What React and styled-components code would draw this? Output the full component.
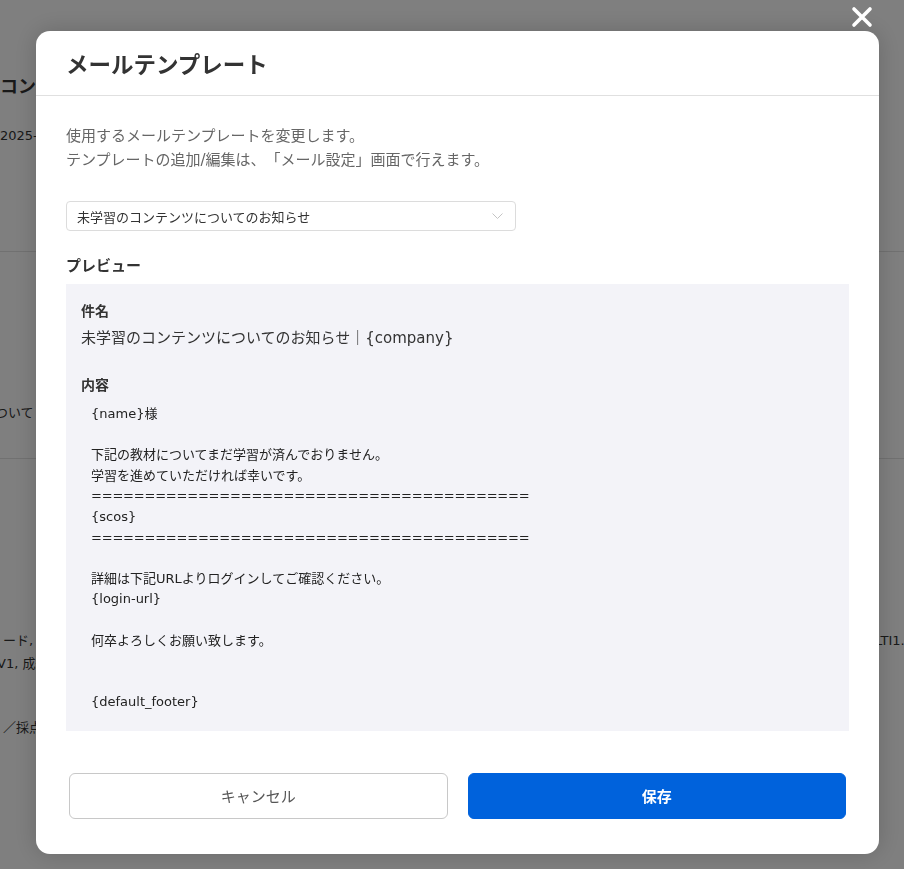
import React from 'react';
import styled, { createGlobalStyle } from 'styled-components';

const font = `"DejaVu Sans", "Noto Sans CJK JP", sans-serif`;

const GlobalStyle = createGlobalStyle`
  html, body {
    margin: 0;
    padding: 0;
    overflow: hidden;
    background: #ffffff;
  }
  body {
    font-family: ${font};
    color: #333;
    text-spacing-trim: space-all;
  }
`;

/* ---------- page behind the dialog ---------- */

const Page = styled.div`
  width: 904px;
  height: 869px;
  overflow: hidden;
  padding-top: 75px;
  box-sizing: border-box;
  color: #333;
`;

const PageTitle = styled.h1`
  margin: 0;
  font-size: 18px;
  line-height: 24px;
  font-weight: 700;
  white-space: nowrap;
`;

const PageText = styled.div`
  margin-top: ${p => p.$top || 0}px;
  margin-left: ${p => p.$shift || 0}px;
  font-size: 13px;
  line-height: ${p => p.$lh || 20}px;
  white-space: nowrap;
`;

const Divider = styled.div`
  margin-top: ${p => p.$top}px;
  height: 1px;
  background: #e2e2e2;
`;

const InfoLine = styled.div`
  margin-top: ${p => p.$top || 0}px;
  display: flex;
  font-size: 13px;
  line-height: 23px;
  white-space: nowrap;
`;

const InfoLeft = styled.span`
  flex: 0 0 875px;
  padding-left: 3px;
  box-sizing: border-box;
`;

/* ---------- dialog ---------- */

const Overlay = styled.div`
  position: fixed;
  inset: 0;
  background: rgba(0, 0, 0, 0.5);
  padding: 31px 0 0 36px;
  box-sizing: border-box;
`;

const CloseButton = styled.button`
  position: absolute;
  top: 6px;
  right: 31px;
  width: 22px;
  height: 22px;
  padding: 0;
  border: none;
  background: transparent;
  display: flex;
  align-items: center;
  justify-content: center;
  cursor: pointer;
`;

const Modal = styled.div`
  width: 843px;
  background: #fff;
  border-radius: 14px;
  box-shadow: 0 0 24px rgba(0, 0, 0, 0.18);
  display: flex;
  flex-direction: column;
`;

const Header = styled.div`
  height: 64px;
  padding: 0 30px;
  display: flex;
  align-items: center;
  border-bottom: 1px solid #e0e0e0;
`;

const Title = styled.h2`
  margin: 0;
  font-size: 22.5px;
  font-weight: 700;
  color: #333;
`;

const Body = styled.div`
  padding: 28px 30px 0;
  display: flex;
  flex-direction: column;
`;

const Description = styled.p`
  margin: 0;
  font-size: 15px;
  line-height: 24px;
  color: #666;
`;

const Select = styled.div`
  margin-top: 29px;
  width: 450px;
  height: 30px;
  box-sizing: border-box;
  border: 1px solid #dcdcdc;
  border-radius: 4px;
  padding: 0 12px 0 10px;
  display: flex;
  align-items: center;
  justify-content: space-between;
  font-size: 13px;
  color: #333;
`;

const SectionLabel = styled.div`
  margin-top: 24px;
  font-size: 15px;
  line-height: 22px;
  font-weight: 700;
  color: #333;
`;

const Preview = styled.div`
  margin-top: 7px;
  background: #f3f3f8;
  padding: 16px 15px 18px;
`;

const FieldLabel = styled.div`
  margin-top: ${p => p.$top || 0}px;
  font-size: 14px;
  line-height: 22px;
  font-weight: 700;
  color: #333;
`;

const Subject = styled.div`
  margin-top: 4px;
  font-size: 15px;
  line-height: 24px;
  color: #333;
`;

const Content = styled.pre`
  margin: 8px 0 0;
  padding-left: 10px;
  font-family: ${font};
  font-size: 13px;
  line-height: 20.6px;
  color: #222;
  white-space: pre;
`;

const Rule = styled.span`
  letter-spacing: -0.2px;
`;

const Footer = styled.div`
  margin-top: 42px;
  padding: 0 33px 35px;
  display: grid;
  grid-template-columns: 1fr 1fr;
  gap: 20px;
`;

const Button = styled.button`
  height: 46px;
  border-radius: 6px;
  font-family: ${font};
  font-size: 15px;
  cursor: pointer;
  border: 1px solid ${p => (p.$primary ? '#0062dc' : '#c8c8c8')};
  background: ${p => (p.$primary ? '#0062dc' : '#fff')};
  color: ${p => (p.$primary ? '#fff' : '#555')};
  font-weight: ${p => (p.$primary ? 700 : 400)};
`;

const Chevron = () => (
  <svg width="11" height="6" viewBox="0 0 11 6" fill="none">
    <path d="M0.5 0.5 L5.5 5.5 L10.5 0.5" stroke="#c4c4c4" strokeWidth="1" />
  </svg>
);

const CloseIcon = () => (
  <svg width="22" height="22" viewBox="0 0 22 22">
    <path d="M3 3 L19 19 M19 3 L3 19" stroke="#fff" strokeWidth="3.6" strokeLinecap="round" />
  </svg>
);

const RULE = '='.repeat(41);

export default function App() {
  return (
    <>
      <GlobalStyle />
      <Page>
        <PageTitle>コンテンツ詳細</PageTitle>
        <PageText $top={27}>2025-04-01 10:00</PageText>
        <Divider $top={105} />
        <PageText $top={151} $shift={-5}>ついて</PageText>
        <Divider $top={35} />
        <InfoLine $top={170}>
          <InfoLeft>ード, 形式</InfoLeft>
          <span>LTI1.3</span>
        </InfoLine>
        <PageText $shift={-3} $lh={23}>V1, 成績</PageText>
        <PageText $top={41} $shift={3} $lh={23}>／採点</PageText>
      </Page>

      <Overlay>
        <CloseButton aria-label="閉じる">
          <CloseIcon />
        </CloseButton>
        <Modal>
          <Header>
            <Title>メールテンプレート</Title>
          </Header>
          <Body>
            <Description>
              使用するメールテンプレートを変更します。
              <br />
              テンプレートの追加/編集は、「メール設定」画面で行えます。
            </Description>
            <Select>
              <span>未学習のコンテンツについてのお知らせ</span>
              <Chevron />
            </Select>
            <SectionLabel>プレビュー</SectionLabel>
            <Preview>
              <FieldLabel>件名</FieldLabel>
              <Subject>未学習のコンテンツについてのお知らせ｜{'{company}'}</Subject>
              <FieldLabel $top={24}>内容</FieldLabel>
              <Content>
                {'{name}様\n\n下記の教材についてまだ学習が済んでおりません。\n学習を進めていただければ幸いです。\n'}
                <Rule>{RULE}</Rule>
                {'\n{scos}\n'}
                <Rule>{RULE}</Rule>
                {'\n\n詳細は下記URLよりログインしてご確認ください。\n{login-url}\n\n何卒よろしくお願い致します。\n\n\n{default_footer}'}
              </Content>
            </Preview>
          </Body>
          <Footer>
            <Button>キャンセル</Button>
            <Button $primary>保存</Button>
          </Footer>
        </Modal>
      </Overlay>
    </>
  );
}
